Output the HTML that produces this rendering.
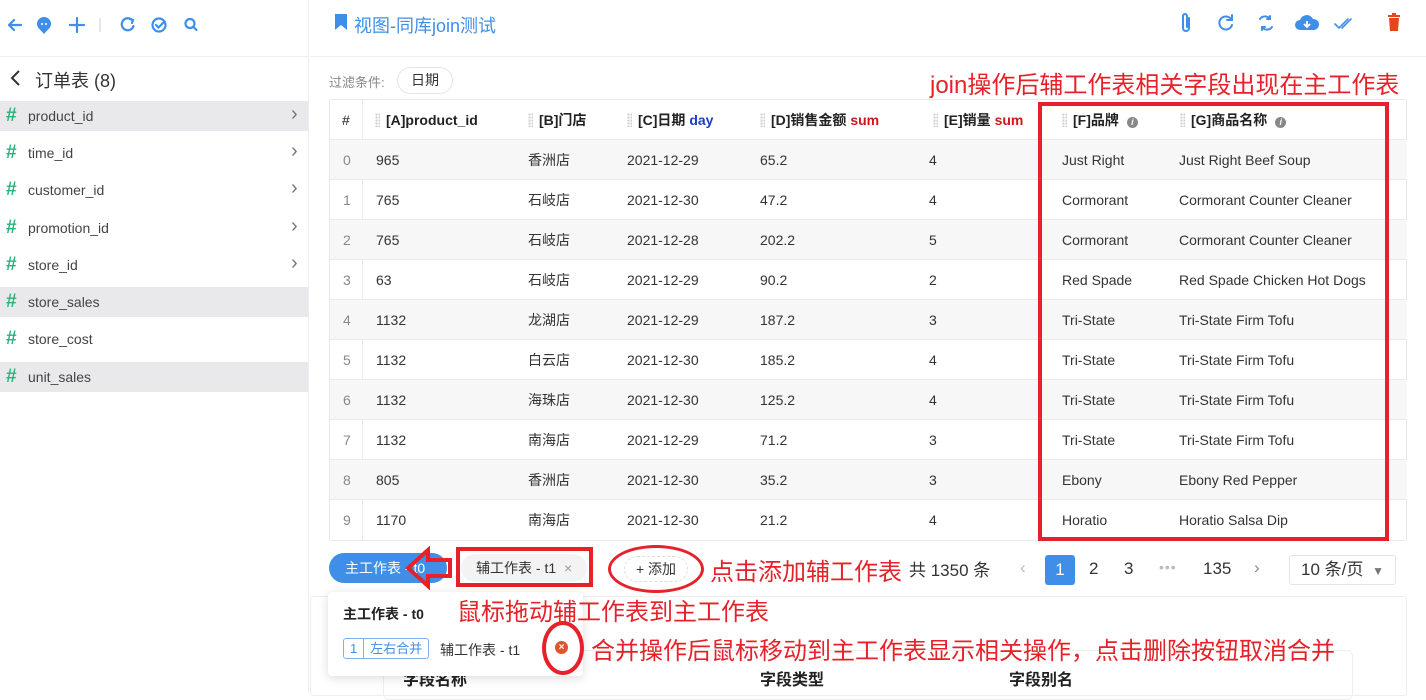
<!DOCTYPE html>
<html><head><meta charset="utf-8"><style>
*{margin:0;padding:0;box-sizing:border-box}
body{width:1426px;height:692px;overflow:hidden;background:#fff;font-family:"Liberation Sans","Noto Sans CJK SC",sans-serif;color:#333;position:relative;font-size:14px}
.a{position:absolute;white-space:nowrap}
.side{left:0;top:0;width:309px;height:692px;border-right:1px solid #eee;background:#fff}
.item{position:absolute;left:0;width:308px;height:30px;line-height:30px;font-size:14px;color:#444}
.item.h{background:#e9e9eb}
.item .hs{position:absolute;left:6px;color:#2bb37d;font-size:19px;font-weight:bold}
.item .t{position:absolute;left:28px}
.item .c{position:absolute;left:291px;top:-2px;color:#777;font-size:20px}
.row{position:absolute;left:330px;width:1077px;height:40px;border-bottom:1px solid #ececec;font-size:14px;color:#333;line-height:40px}
.row.g{background:#f7f7f7}
.row span{position:absolute}
.red{color:#e6212a;font-size:24px}
.hd span{font-weight:bold;color:#222}
.grip{display:inline-block;width:5px;height:14px;margin-right:6px;vertical-align:-2px;background-image:radial-gradient(#ccc 1px,transparent 1.2px);background-size:3px 3px}
.info{display:inline-block;width:11px;height:11px;border-radius:50%;background:#888;color:#fff;font-size:9px;line-height:11px;text-align:center;margin-left:8px;vertical-align:0;font-weight:bold}
</style></head><body>
<div class="a side">
 <svg class="a" style="left:6px;top:14px" width="200" height="22" viewBox="0 0 200 22">
  <g fill="none" stroke="#3f8fe8" stroke-width="2.2" stroke-linecap="round">
   <path d="M3 11h12M3 11l5-5M3 11l5 5"/>
   <path d="M64 11h14M71 4v14"/>
   <path d="M126 6a6 6 0 1 0 1.5 6"/><path d="M124 5l3 1 -1 3"/>
   <circle cx="153" cy="11" r="6.5"/><path d="M150 11l2.5 2.5 5-5"/>
   <circle cx="184" cy="9.5" r="4.5"/><path d="M187.5 13l3 3"/>
  </g>
  <path d="M38 3a7 7 0 0 1 7 7c0 4-4 6-7 10-3-4-7-6-7-10a7 7 0 0 1 7-7z" fill="#3f8fe8"/>
  <circle cx="36" cy="10" r="1" fill="#fff"/><circle cx="40" cy="10" r="1" fill="#fff"/>
  <path d="M94 4v14" stroke="#ddd" stroke-width="1.5"/>
 </svg>
 <div class="a" style="left:0;top:56px;width:308px;border-top:1px solid #eee"></div>
 <svg class="a" style="left:8px;top:69px" width="14" height="18"><path d="M11 2L4 9l7 7" fill="none" stroke="#333" stroke-width="2"/></svg>
 <div class="a" style="left:35px;top:67px;font-size:18px;color:#333">订单表 (8)</div>
 <div class="item h" style="top:101px"><span class="hs">#</span><span class="t">product_id</span><span class="c">›</span></div>
 <div class="item" style="top:138px"><span class="hs">#</span><span class="t">time_id</span><span class="c">›</span></div>
 <div class="item" style="top:175px"><span class="hs">#</span><span class="t">customer_id</span><span class="c">›</span></div>
 <div class="item" style="top:213px"><span class="hs">#</span><span class="t">promotion_id</span><span class="c">›</span></div>
 <div class="item" style="top:250px"><span class="hs">#</span><span class="t">store_id</span><span class="c">›</span></div>
 <div class="item h" style="top:287px"><span class="hs">#</span><span class="t">store_sales</span></div>
 <div class="item" style="top:324px"><span class="hs">#</span><span class="t">store_cost</span></div>
 <div class="item h" style="top:362px"><span class="hs">#</span><span class="t">unit_sales</span></div>
</div>
<div class="a" style="left:310px;top:56px;width:1116px;border-top:1px solid #f0f0f0"></div>
<svg class="a" style="left:334px;top:13px" width="14" height="18"><path d="M1 1h12v16l-6-5-6 5z" fill="#3f8fe8"/></svg>
<div class="a" style="left:354px;top:12px;font-size:18px;color:#3f8fe8">视图-同库join测试</div>
<svg class="a" style="left:1176px;top:10px" width="240" height="26" viewBox="0 0 240 26">
 <g fill="none" stroke="#3f8fe8" stroke-width="2" stroke-linecap="round">
  <path d="M13 8v10a3 3 0 0 1-6 0V6a2 2 0 0 1 4 0v11"/>
  <path d="M55 9a6.5 6.5 0 1 0 1 6"/><path d="M56 5v5h-5"/>
  <path d="M84 9a6 6 0 0 1 10 0M96 17a6 6 0 0 1-10 0"/><path d="M94 6v3h-3M86 20v-3h3"/>
  <path d="M159 14l4 4 9-9M166 18l9-9" stroke-width="1.6"/>
 </g>
 <path d="M124 20a5 5 0 0 1 0-10 7 7 0 0 1 13-1 5 5 0 0 1 1 11z" fill="#3f8fe8"/>
 <path d="M131 11v6M128 14l3 3 3-3" stroke="#fff" stroke-width="1.8" fill="none"/>
 <rect x="212" y="5" width="12" height="2" fill="#e8451c"/><rect x="216" y="3" width="4" height="3" fill="#e8451c"/>
 <path d="M213 8h10l-1 13h-8z" fill="#e8451c"/>
</svg>
<div class="a" style="left:329px;top:72px;font-size:13px;color:#888">过滤条件:</div>
<div class="a" style="left:397px;top:67px;width:56px;height:27px;border:1px solid #e4e4e4;border-radius:14px;font-size:14px;line-height:25px;text-align:center;color:#333">日期</div>
<div class="a red" style="left:930px;top:65px;font-size:24px">join操作后辅工作表相关字段出现在主工作表</div>
<div class="a" style="left:329px;top:99px;width:1078px;height:442px;border:1px solid #e8e8e8;border-radius:3px"></div>
<div class="a" style="left:362px;top:100px;height:440px;border-left:1px solid #ececec"></div>
<div class="row hd" style="top:100px;background:transparent"><span style="left:12px;font-weight:normal">#</span><span style="left:45px"><i class="grip"></i>[A]product_id</span><span style="left:198px"><i class="grip"></i>[B]门店</span><span style="left:297px"><i class="grip"></i>[C]日期 <b style="color:#1a3fbf">day</b></span><span style="left:430px"><i class="grip"></i>[D]销售金额 <b style="color:#d0141b">sum</b></span><span style="left:603px"><i class="grip"></i>[E]销量 <b style="color:#d0141b">sum</b></span><span style="left:732px"><i class="grip"></i>[F]品牌<i class="info">i</i></span><span style="left:850px"><i class="grip"></i>[G]商品名称<i class="info">i</i></span></div>
<div class="row g" style="top:140px"><span style="left:13px;color:#888">0</span><span style="left:46px">965</span><span style="left:198px">香洲店</span><span style="left:297px">2021-12-29</span><span style="left:430px">65.2</span><span style="left:599px">4</span><span style="left:732px">Just Right</span><span style="left:849px">Just Right Beef Soup</span></div>
<div class="row" style="top:180px"><span style="left:13px;color:#888">1</span><span style="left:46px">765</span><span style="left:198px">石岐店</span><span style="left:297px">2021-12-30</span><span style="left:430px">47.2</span><span style="left:599px">4</span><span style="left:732px">Cormorant</span><span style="left:849px">Cormorant Counter Cleaner</span></div>
<div class="row g" style="top:220px"><span style="left:13px;color:#888">2</span><span style="left:46px">765</span><span style="left:198px">石岐店</span><span style="left:297px">2021-12-28</span><span style="left:430px">202.2</span><span style="left:599px">5</span><span style="left:732px">Cormorant</span><span style="left:849px">Cormorant Counter Cleaner</span></div>
<div class="row" style="top:260px"><span style="left:13px;color:#888">3</span><span style="left:46px">63</span><span style="left:198px">石岐店</span><span style="left:297px">2021-12-29</span><span style="left:430px">90.2</span><span style="left:599px">2</span><span style="left:732px">Red Spade</span><span style="left:849px">Red Spade Chicken Hot Dogs</span></div>
<div class="row g" style="top:300px"><span style="left:13px;color:#888">4</span><span style="left:46px">1132</span><span style="left:198px">龙湖店</span><span style="left:297px">2021-12-29</span><span style="left:430px">187.2</span><span style="left:599px">3</span><span style="left:732px">Tri-State</span><span style="left:849px">Tri-State Firm Tofu</span></div>
<div class="row" style="top:340px"><span style="left:13px;color:#888">5</span><span style="left:46px">1132</span><span style="left:198px">白云店</span><span style="left:297px">2021-12-30</span><span style="left:430px">185.2</span><span style="left:599px">4</span><span style="left:732px">Tri-State</span><span style="left:849px">Tri-State Firm Tofu</span></div>
<div class="row g" style="top:380px"><span style="left:13px;color:#888">6</span><span style="left:46px">1132</span><span style="left:198px">海珠店</span><span style="left:297px">2021-12-30</span><span style="left:430px">125.2</span><span style="left:599px">4</span><span style="left:732px">Tri-State</span><span style="left:849px">Tri-State Firm Tofu</span></div>
<div class="row" style="top:420px"><span style="left:13px;color:#888">7</span><span style="left:46px">1132</span><span style="left:198px">南海店</span><span style="left:297px">2021-12-29</span><span style="left:430px">71.2</span><span style="left:599px">3</span><span style="left:732px">Tri-State</span><span style="left:849px">Tri-State Firm Tofu</span></div>
<div class="row g" style="top:460px"><span style="left:13px;color:#888">8</span><span style="left:46px">805</span><span style="left:198px">香洲店</span><span style="left:297px">2021-12-30</span><span style="left:430px">35.2</span><span style="left:599px">3</span><span style="left:732px">Ebony</span><span style="left:849px">Ebony Red Pepper</span></div>
<div class="row" style="top:500px;border-bottom:none"><span style="left:13px;color:#888">9</span><span style="left:46px">1170</span><span style="left:198px">南海店</span><span style="left:297px">2021-12-30</span><span style="left:430px">21.2</span><span style="left:599px">4</span><span style="left:732px">Horatio</span><span style="left:849px">Horatio Salsa Dip</span></div>
<div class="a" style="left:1038px;top:102px;width:351px;height:439px;border:4px solid #e6212a"></div>

<div class="a" style="left:329px;top:553px;width:118px;height:30px;border-radius:15px;background:#3f8fe8;color:#fff;font-size:14px;line-height:30px;padding-left:16px">主工作表 - t0</div>
<svg class="a" style="left:404px;top:546px" width="50" height="44"><path d="M46 14H24V4L4 22l20 18V30h22z" fill="none" stroke="#e6212a" stroke-width="4"/></svg>
<div class="a" style="left:461px;top:554px;width:126px;height:28px;border-radius:14px;background:#f3f3f3;font-size:14px;line-height:28px;padding-left:15px;color:#333">辅工作表 - t1 <span style="color:#999;margin-left:4px">×</span></div>
<div class="a" style="left:456px;top:547px;width:137px;height:40px;border:4px solid #e6212a"></div>
<div class="a" style="left:624px;top:556px;width:64px;height:26px;border:1px dashed #ddd;border-radius:13px;font-size:14px;line-height:24px;text-align:center">+ 添加</div>
<div class="a" style="left:608px;top:545px;width:96px;height:48px;border:3px solid #e6212a;border-radius:50%"></div>
<div class="a red" style="left:710px;top:552px">点击添加辅工作表</div>
<div class="a" style="left:909px;top:556px;font-size:17px;color:#333">共 1350 条</div>
<div class="a" style="left:1020px;top:558px;font-size:17px;color:#bbb">‹</div>
<div class="a" style="left:1045px;top:555px;width:30px;height:30px;background:#3f8fe8;color:#fff;border-radius:3px;text-align:center;line-height:30px;font-size:17px">1</div>
<div class="a" style="left:1089px;top:559px;font-size:17px">2</div>
<div class="a" style="left:1124px;top:559px;font-size:17px">3</div>
<div class="a" style="left:1159px;top:559px;font-size:14px;color:#bbb;letter-spacing:1px">•••</div>
<div class="a" style="left:1203px;top:559px;font-size:17px">135</div>
<div class="a" style="left:1254px;top:558px;font-size:17px;color:#888">›</div>
<div class="a" style="left:1289px;top:555px;width:107px;height:30px;border:1px solid #e4e4e4;border-radius:3px;font-size:17px;line-height:28px;padding-left:11px">10 条/页 <span style="color:#777;font-size:12px;margin-left:4px">▼</span></div>

<div class="a" style="left:310px;top:596px;width:1097px;height:100px;border:1px solid #eee;border-radius:3px"></div>
<div class="a" style="left:383px;top:650px;width:970px;height:50px;border:1px solid #eee;border-radius:6px"></div>
<div class="a" style="left:403px;top:666px;font-size:16px;font-weight:bold;color:#222">字段名称</div>
<div class="a" style="left:760px;top:666px;font-size:16px;font-weight:bold;color:#222">字段类型</div>
<div class="a" style="left:1009px;top:666px;font-size:16px;font-weight:bold;color:#222">字段别名</div>

<div class="a" style="left:328px;top:592px;width:255px;height:84px;background:#fff;border-radius:4px;box-shadow:0 2px 10px rgba(0,0,0,.15)"></div>
<div class="a" style="left:343px;top:604px;font-size:14px;font-weight:bold;color:#222">主工作表 - t0</div>
<div class="a" style="left:343px;top:638px;height:21px;border:1px solid #7cb3ee;border-radius:3px;font-size:13px;color:#3f8fe8;line-height:19px;display:flex"><span style="padding:0 6px;border-right:1px solid #7cb3ee">1</span><span style="padding:0 6px">左右合并</span></div>
<div class="a" style="left:440px;top:640px;font-size:14px;color:#333">辅工作表 - t1</div>
<div class="a" style="left:555px;top:641px;width:13px;height:13px;border-radius:50%;background:#e0532b;color:#fff;font-size:10px;line-height:13px;text-align:center;font-weight:bold">×</div>
<div class="a" style="left:542px;top:621px;width:42px;height:54px;border:4px solid #e6212a;border-radius:50%"></div>
<div class="a red" style="left:457px;top:592px">鼠标拖动辅工作表到主工作表</div>
<div class="a red" style="left:591px;top:631px">合并操作后鼠标移动到主工作表显示相关操作，点击删除按钮取消合并</div>
</body></html>
